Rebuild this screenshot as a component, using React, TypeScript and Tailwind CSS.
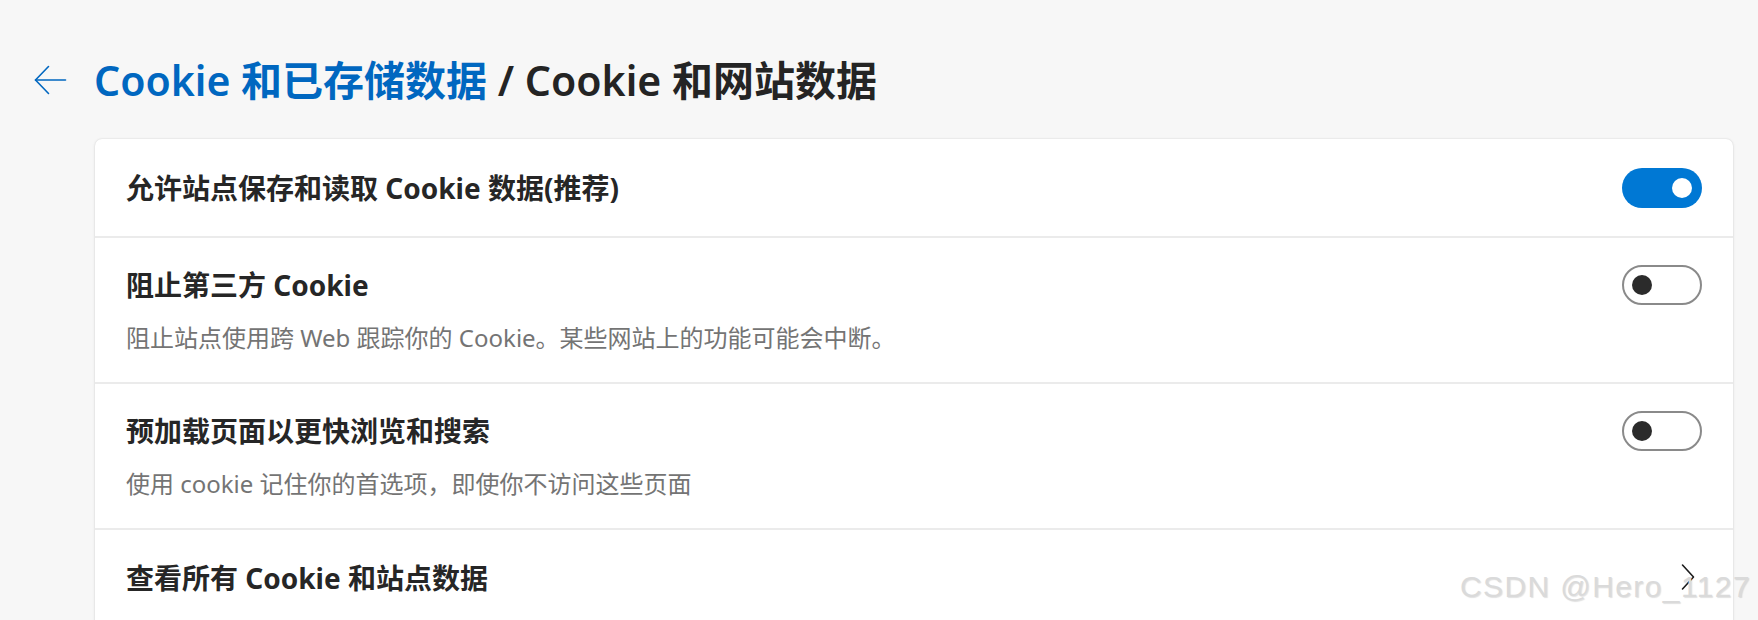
import { useState } from "react";

interface SettingRow {
  id: number;
  title: string;
  desc?: string;
  kind: "toggle" | "link";
  on?: boolean;
}

const rows: SettingRow[] = [
  { id: 1, title: "允许站点保存和读取 Cookie 数据(推荐)", kind: "toggle", on: true },
  { id: 2, title: "阻止第三方 Cookie", desc: "阻止站点使用跨 Web 跟踪你的 Cookie。某些网站上的功能可能会中断。", kind: "toggle", on: false },
  { id: 3, title: "预加载页面以更快浏览和搜索", desc: "使用 cookie 记住你的首选项，即使你不访问这些页面", kind: "toggle", on: false },
  { id: 4, title: "查看所有 Cookie 和站点数据", kind: "link" },
];

function Toggle({ on, onChange }: { on: boolean; onChange: () => void }) {
  return (
    <button
      onClick={onChange}
      className={
        on
          ? "flex h-[40px] w-[80px] shrink-0 items-center justify-end rounded-full bg-[#0078d4] px-[10px]"
          : "flex h-[40px] w-[80px] shrink-0 items-center justify-start rounded-full border-2 border-[#8a8a8a] bg-white px-[8px]"
      }
    >
      <span className={on ? "h-[20px] w-[20px] rounded-full bg-white" : "h-[20px] w-[20px] rounded-full bg-[#2b2b2b]"} />
    </button>
  );
}

export default function App() {
  const [state, setState] = useState<Record<number, boolean>>({ 1: true, 2: false, 3: false });

  return (
    <div
      className="relative h-[620px] w-full overflow-hidden bg-[#f7f7f7]"
      style={{ fontFamily: '"Noto Sans", "Noto Sans CJK SC", sans-serif' }}
    >
      <div className="flex h-[60px] items-center pl-[34px] mt-[50px]">
        <svg width="33" height="30" viewBox="0 0 33 30" fill="none" stroke="#0067c0" strokeWidth="1.6" strokeLinecap="round" strokeLinejoin="round">
          <path d="M1.5 15 H31.5" />
          <path d="M14.5 1.5 L1.5 15 L14.5 28.5" />
        </svg>
        <h1 className="ml-[27px] text-[41px] leading-[60px] font-semibold text-[#242424]">
          <span className="text-[#0067c0]">Cookie 和已存储数据</span> / Cookie 和网站数据
        </h1>
      </div>

      <div className="ml-[95px] mr-[25px] mt-[29px] rounded-[7px] bg-white shadow-[0_0_2px_rgba(0,0,0,0.14),0_1px_4px_rgba(0,0,0,0.06)]">
        {rows.map((row, i) => (
          <div
            key={row.id}
            className={
              (i > 0 ? "border-t-2 border-[#ebebeb] " : "") +
              (row.desc
                ? "flex items-start justify-between px-[31px] py-[27px]"
                : i === 0
                ? "flex h-[97px] items-center justify-between px-[31px]"
                : "flex items-start justify-between px-[31px] pt-[28px] pb-[30px]")
            }
          >
            <div className="flex flex-col">
              <div className="text-[28px] leading-[40px] font-bold text-[#262626]">{row.title}</div>
              {row.desc && (
                <div className="mt-[16px] text-[24px] leading-[34px] text-[#747474]">{row.desc}</div>
              )}
            </div>
            {row.kind === "toggle" ? (
              <Toggle
                on={state[row.id]}
                onChange={() => setState({ ...state, [row.id]: !state[row.id] })}
              />
            ) : (
              <svg width="24" height="28" viewBox="0 0 24 28" fill="none" stroke="#1c1c1c" strokeWidth="1.6" strokeLinecap="round" strokeLinejoin="round" className="mt-[5px]">
                <path d="M4.5 2 L15.5 14 L4.5 26" />
              </svg>
            )}
          </div>
        ))}
      </div>

      <div
        className="absolute right-[7px] top-[572px] text-[30px] leading-[30px] tracking-[1.4px] text-[#dadada] [text-shadow:1px_1px_1px_rgba(0,0,0,0.12)]"
        style={{ fontFamily: '"Liberation Sans", Arial, sans-serif' }}
      >
        CSDN @Hero_1127
      </div>
    </div>
  );
}
